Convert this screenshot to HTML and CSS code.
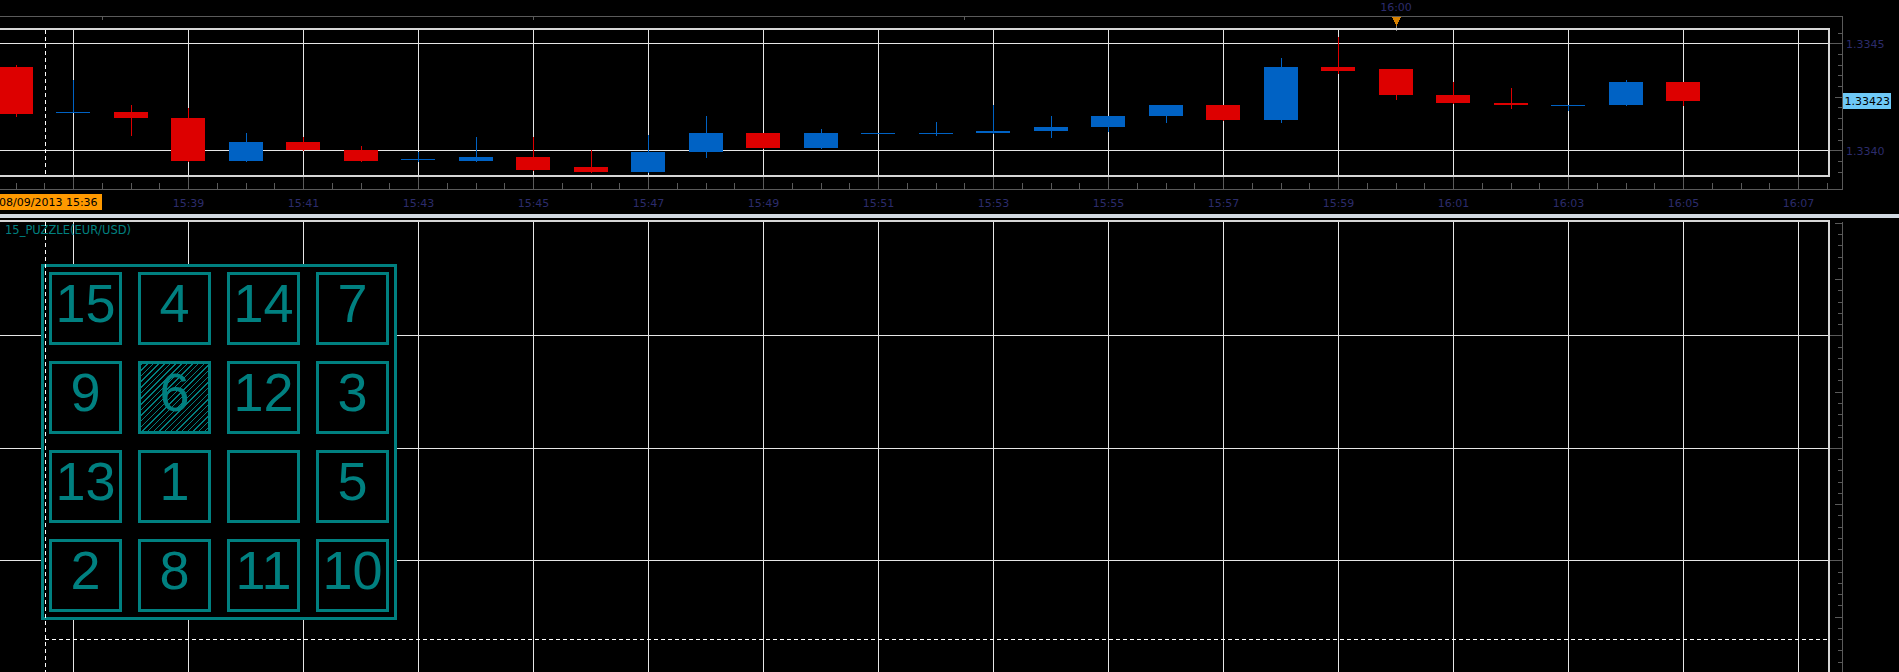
FILE: index.html
```html
<!DOCTYPE html>
<html lang="en">
<head>
    <meta charset="UTF-8">
    <title>EURUSD,M1</title>
    <link rel="stylesheet" href="styles.css">
</head>
<body>
    <div class="terminal">
        <div class="pane pane-main">
            <svg id="priceChart" class="chart" width="1899" height="214"></svg>
            <div class="crosshair-v main-cross"></div>
        </div>
        <div class="splitter"></div>
        <div class="pane pane-sub">
            <svg id="subChart" class="chart" width="1899" height="454"></svg>
            <div class="sub-title">15_PUZZLE(EUR/USD)</div>
            <div class="puzzle" id="puzzle"></div>
            <div class="crosshair-v sub-cross"></div>
        </div>
    </div>

    <script>
        const NS = 'http://www.w3.org/2000/svg';

        // chart geometry (M1, 2-minute grid)
        const FIRST_BAR_X = 16;      // centre of the 15:36 bar
        const BAR_STEP = 57.5;       // px per minute
        const GRID_X0 = 73.5;        // 15:37
        const GRID_STEP = 115;
        const BODY_W = 34;
        const FRAME_R = 1829;
        const AXIS_X = 1842.5;
        const BASE_PRICE = 1.3340;
        const BASE_Y = 150.3;
        const PX_PER_POINT = 2.14;   // one point = 0.00001

        // open, high, low, close
        const bars = [
            [1.33439, 1.33440, 1.33416, 1.33417],
            [1.33418, 1.33433, 1.33418, 1.33418],
            [1.33418, 1.33421, 1.33407, 1.33415],
            [1.33415, 1.33420, 1.33395, 1.33395],
            [1.33395, 1.33408, 1.33395, 1.33404],
            [1.33404, 1.33406, 1.33400, 1.33400],
            [1.33400, 1.33402, 1.33395, 1.33395],
            [1.33396, 1.33399, 1.33395, 1.33396],
            [1.33395, 1.33406, 1.33395, 1.33397],
            [1.33397, 1.33406, 1.33391, 1.33391],
            [1.33392, 1.33400, 1.33390, 1.33390],
            [1.33390, 1.33407, 1.33390, 1.33399],
            [1.33399, 1.33416, 1.33397, 1.33408],
            [1.33408, 1.33408, 1.33401, 1.33401],
            [1.33401, 1.33410, 1.33401, 1.33408],
            [1.33408, 1.33408, 1.33408, 1.33408],
            [1.33408, 1.33413, 1.33407, 1.33408],
            [1.33408, 1.33421, 1.33408, 1.33409],
            [1.33409, 1.33416, 1.33406, 1.33411],
            [1.33411, 1.33416, 1.33409, 1.33416],
            [1.33416, 1.33421, 1.33413, 1.33421],
            [1.33421, 1.33421, 1.33414, 1.33414],
            [1.33414, 1.33443, 1.33413, 1.33439],
            [1.33439, 1.33453, 1.33436, 1.33437],
            [1.33438, 1.33438, 1.33424, 1.33426],
            [1.33426, 1.33432, 1.33422, 1.33422],
            [1.33422, 1.33429, 1.33420, 1.33421],
            [1.33421, 1.33421, 1.33419, 1.33421],
            [1.33421, 1.33433, 1.33421, 1.33432],
            [1.33432, 1.33432, 1.33421, 1.33423]
        ];

        const tiles = [15, 4, 14, 7, 9, 6, 12, 3, 13, 1, 0, 5, 2, 8, 11, 10];
        const selectedTile = 6;

        function priceY(p) {
            return BASE_Y - (p - BASE_PRICE) / 0.00001 * PX_PER_POINT;
        }

        function add(parent, tag, attrs, text) {
            const node = document.createElementNS(NS, tag);
            for (const k in attrs) node.setAttribute(k, attrs[k]);
            if (text !== undefined) node.textContent = text;
            parent.appendChild(node);
            return node;
        }

        function hline(svg, y, x1, x2, cls) {
            return add(svg, 'line', { x1: x1, y1: y, x2: x2, y2: y, class: cls });
        }

        function vline(svg, x, y1, y2, cls) {
            return add(svg, 'line', { x1: x, y1: y1, x2: x, y2: y2, class: cls });
        }

        function gridX(i) {
            return Math.floor(GRID_X0 + GRID_STEP * i) + 0.5;
        }

        function pad(n) {
            return n < 10 ? '0' + n : '' + n;
        }

        function drawMain() {
            const svg = document.getElementById('priceChart');

            // top ruler with the 16:00 marker
            hline(svg, 16.5, 0, AXIS_X, 'axis');
            [102, 533, 964].forEach(x => vline(svg, x + 0.5, 16, 20, 'axis'));
            add(svg, 'text', { x: 1396, y: 11, 'text-anchor': 'middle' }, '16:00');
            add(svg, 'polygon', { points: '1392,17 1401,17 1396.5,26', class: 'marker' });
            vline(svg, 1396.5, 26, 31, 'axis-light');

            // horizontal grid + price levels
            [1.3345, 1.3340].forEach(p => {
                const y = Math.round(priceY(p)) + 0.5;
                hline(svg, y, 0, FRAME_R, 'grid');
                hline(svg, y, FRAME_R, AXIS_X, 'axis');
                add(svg, 'text', { x: 1846, y: y + 4 }, p.toFixed(4));
            });

            // vertical grid + time labels
            for (let i = 0; i < 16; i++) {
                const x = gridX(i);
                vline(svg, x, 30, 175, 'grid');
                vline(svg, x, 177, 189, 'axis');
                if (i > 0) {
                    const m = 37 + 2 * i;
                    const label = (15 + Math.floor(m / 60)) + ':' + pad(m % 60);
                    add(svg, 'text', { x: x, y: 206.5, 'text-anchor': 'middle' }, label);
                }
            }

            // minor time ticks
            for (let j = -2; GRID_X0 + 28.75 * j < FRAME_R; j++) {
                if (j % 4 === 0) continue;
                const x = Math.floor(GRID_X0 + 28.75 * j) + 0.5;
                vline(svg, x, 183, 189, 'axis');
            }

            // price axis ticks
            for (let k = -1; k <= 12; k++) {
                if (k % 10 === 0) continue;
                const y = Math.round(43.3 + k * 10.7) + 0.5;
                hline(svg, y, k % 5 === 0 ? 1835 : 1838, AXIS_X, 'axis');
            }

            hline(svg, 189.5, 0, AXIS_X, 'axis');
            vline(svg, AXIS_X, 16, 189.5, 'axis');

            // candles
            bars.forEach((b, i) => {
                const [o, h, l, c] = b;
                const cx = Math.floor(FIRST_BAR_X + BAR_STEP * i);
                const cls = c >= o ? 'bull' : 'bear';
                const hi = Math.round(priceY(h));
                const lo = Math.round(priceY(l));
                add(svg, 'rect', { x: cx, y: hi, width: 1, height: Math.max(1, lo - hi + 1), class: cls });
                const top = Math.round(priceY(Math.max(o, c)));
                const bot = Math.round(priceY(Math.min(o, c)));
                add(svg, 'rect', { x: cx - BODY_W / 2, y: top, width: BODY_W, height: Math.max(1, bot - top), class: cls });
            });

            // frame
            add(svg, 'rect', { x: -2, y: 29, width: FRAME_R + 2, height: 147, class: 'frame' });

            // bid label
            add(svg, 'rect', { x: 1843, y: 93, width: 48, height: 16, class: 'bid' });
            add(svg, 'text', { x: 1844.5, y: 105, class: 'bid-text' }, '1.33423');

            // crosshair date
            add(svg, 'rect', { x: -14, y: 194, width: 116, height: 16, class: 'date-box' });
            add(svg, 'text', { x: -1, y: 206, class: 'date-text' }, '08/09/2013 15:36');
        }

        function drawSub() {
            const svg = document.getElementById('subChart');

            for (let i = 0; i < 16; i++) vline(svg, gridX(i), 4, 454, 'grid');

            for (let k = 0; k < 40; k++) {
                const y = Math.round(4.8 + k * 11.25) + 0.5;
                if (k % 10 === 0 && k > 0) {
                    hline(svg, y, 0, FRAME_R, 'grid');
                    hline(svg, y, FRAME_R, AXIS_X, 'axis');
                } else {
                    hline(svg, y, k % 5 === 0 ? 1835 : 1838, AXIS_X, 'axis');
                }
            }

            hline(svg, 421.5, 45, 1828, 'dash');
            vline(svg, AXIS_X, 4, 454, 'axis');
            hline(svg, 3, -2, FRAME_R + 1, 'frame');
            vline(svg, FRAME_R, 3, 454, 'frame');
        }

        function drawPuzzle() {
            const box = document.getElementById('puzzle');
            tiles.forEach(n => {
                const tile = document.createElement('div');
                tile.className = 'tile' + (n === selectedTile ? ' selected' : '');
                tile.textContent = n ? n : '';
                box.appendChild(tile);
            });
        }

        drawMain();
        drawSub();
        drawPuzzle();
    </script>
</body>
</html>
```

FILE: styles.css
```css
body {
    margin: 0;
    background: #000;
    overflow: hidden;
    font-family: "DejaVu Sans", Verdana, sans-serif;
}
.terminal {
    display: flex;
    flex-direction: column;
    width: 1899px;
    height: 672px;
}
.pane {
    position: relative;
    overflow: hidden;
}
.pane-main {
    height: 214px;
}
.splitter {
    height: 4px;
    background: #d2d9e2;
}
.pane-sub {
    flex: 1;
}
.chart {
    display: block;
    shape-rendering: crispEdges;
}
.chart text {
    font-family: "DejaVu Sans", Verdana, sans-serif;
    font-size: 11px;
    fill: #2c2c6c;
}
.chart .grid {
    stroke: #e6e6e6;
    stroke-width: 1;
}
.chart .axis {
    stroke: #5a5a5a;
    stroke-width: 1;
}
.chart .axis-light {
    stroke: #8a8a8a;
    stroke-width: 1;
}
.chart .frame {
    fill: none;
    stroke: #d6d6d6;
    stroke-width: 2;
}
.chart .dash {
    stroke: #fff;
    stroke-width: 1;
    stroke-dasharray: 4 3;
}
.chart .bull {
    fill: #0062c4;
}
.chart .bear {
    fill: #dd0000;
}
.chart .marker {
    fill: #d98200;
}
.chart .bid {
    fill: #6ec9f7;
}
.chart .bid-text,
.chart .date-text {
    fill: #000;
}
.chart .date-box {
    fill: #ff9900;
}
.crosshair-v {
    position: absolute;
    left: 45px;
    width: 1px;
    background: repeating-linear-gradient(to bottom, #fff 0 4px, transparent 4px 7px);
}
.main-cross {
    top: 30px;
    height: 145px;
}
.sub-cross {
    top: 4px;
    bottom: 0;
}
.sub-title {
    position: absolute;
    left: 5px;
    top: 5px;
    font-size: 11.5px;
    line-height: 14px;
    color: #008080;
}
.puzzle {
    position: absolute;
    left: 41px;
    top: 46px;
    border: 3px solid #008080;
    padding: 5px;
    background: #000;
    display: grid;
    grid-template-columns: repeat(4, 73px);
    grid-auto-rows: 73px;
    gap: 16px;
}
.tile {
    box-sizing: border-box;
    border: 3px solid #008080;
    padding-top: 1px;
    font-family: "Liberation Sans", Arial, sans-serif;
    font-size: 54px;
    line-height: 54px;
    text-align: center;
    color: #008080;
}
.tile.selected {
    background: repeating-linear-gradient(135deg, #008080 0 1px, transparent 1px 4px);
}
```
